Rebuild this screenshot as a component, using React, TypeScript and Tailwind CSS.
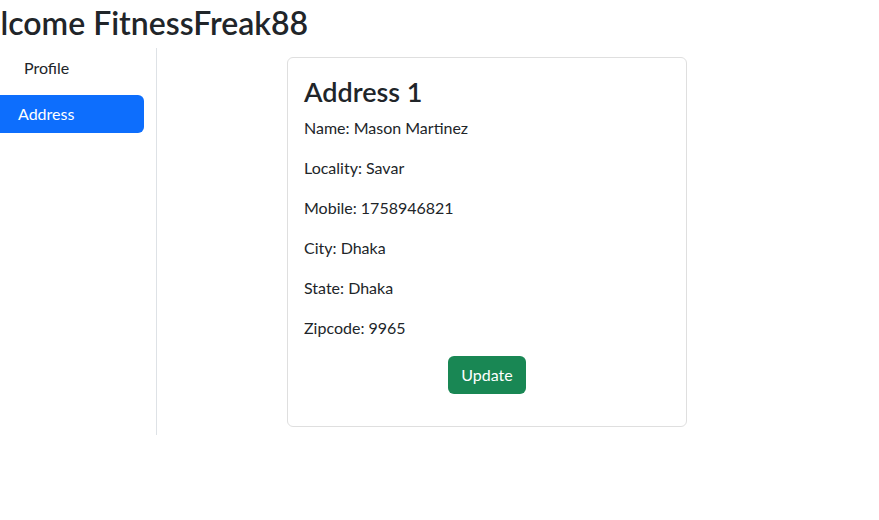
import React from 'react';

const address = [
    ['Name', 'Mason Martinez'],
    ['Locality', 'Savar'],
    ['Mobile', '1758946821'],
    ['City', 'Dhaka'],
    ['State', 'Dhaka'],
    ['Zipcode', '9965'],
];

const App = () => {
    return (
        <div className="min-h-[520px] w-[879px] overflow-hidden bg-white text-[#212529] font-['Lato',sans-serif]">
            <h1 className="ml-[-48px] pt-[2px] mb-[4px] text-[32px] leading-[42px] font-semibold">Welcome FitnessFreak88</h1>
            <div className="flex">
                <div className="w-[157px] shrink-0 border-r border-[#dee2e6] h-[387px]">
                    <div className="pl-[24px] py-[8px] leading-[24px]">Profile</div>
                    <div className="mt-[7px] ml-[-10px] w-[154px] rounded-[6px] bg-[#0d6efd] pl-[28px] py-[7px] leading-[24px] text-white">Address</div>
                </div>
                <div className="pl-[130px] pt-[9px]">
                    <div className="w-[400px] rounded-[6px] border border-[#dfdfdf] px-[16px] pt-[18px] pb-[16px]">
                        <h3 className="mb-[9px] text-[27px] leading-[31px] font-semibold">Address 1</h3>
                        {address.map(([label, value]) => (
                            <p key={label} className="mb-[16px] leading-[24px]">{label}: {value}</p>
                        ))}
                        <div className="flex justify-center mb-[16px]">
                            <button className="rounded-[6px] bg-[#198754] px-[13px] py-[7px] leading-[24px] text-white">Update</button>
                        </div>
                    </div>
                </div>
            </div>
        </div>
    );
};

export default App;
